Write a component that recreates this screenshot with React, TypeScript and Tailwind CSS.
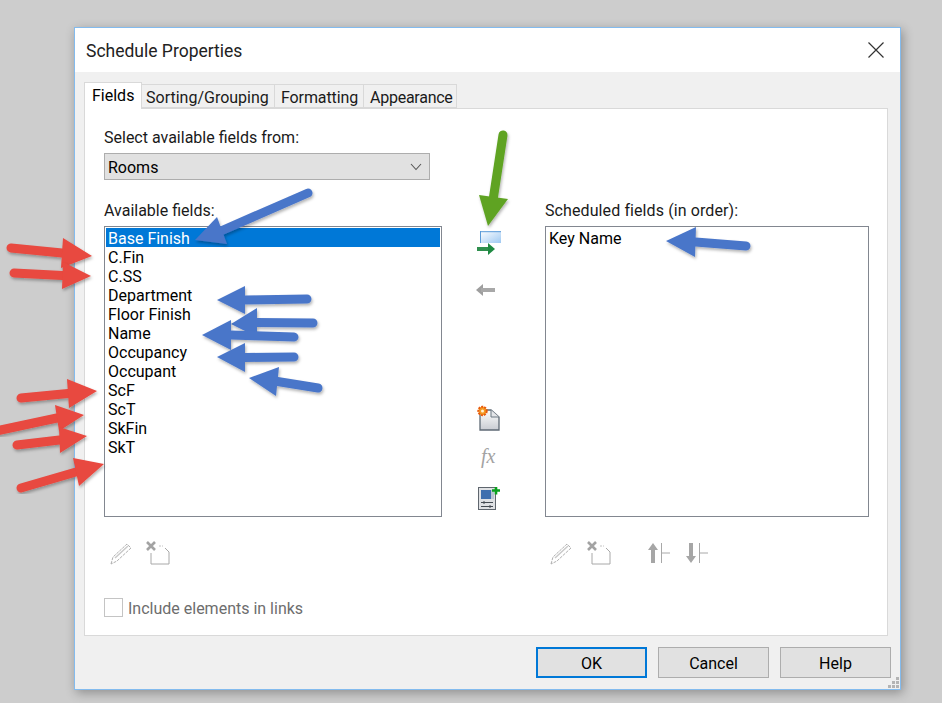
const AVAILABLE = ['Base Finish', 'C.Fin', 'C.SS', 'Department', 'Floor Finish', 'Name', 'Occupancy', 'Occupant', 'ScF', 'ScT', 'SkFin', 'SkT'];

type Pt = [number, number];
type ArrowDef = { tail: Pt; tip: Pt; a: Pt; b: Pt; color: string };

const BLUE = '#4a76c9';
const RED = '#e8483f';
const GREEN = '#5fa324';

const ARROWS: ArrowDef[] = [
  { tail: [308, 193], tip: [195, 240], a: [217, 217], b: [227, 244], color: BLUE },
  { tail: [307, 299], tip: [217, 300], a: [245, 286], b: [245, 314], color: BLUE },
  { tail: [313, 323], tip: [231, 324], a: [257, 308], b: [257, 337], color: BLUE },
  { tail: [294, 337], tip: [202, 335], a: [231, 320], b: [231, 350], color: BLUE },
  { tail: [294, 357], tip: [217, 357], a: [245, 343], b: [245, 372], color: BLUE },
  { tail: [318, 388], tip: [249, 378], a: [279, 367], b: [276, 396], color: BLUE },
  { tail: [746, 246], tip: [666, 241], a: [696, 227], b: [695, 257], color: BLUE },
  { tail: [503, 135], tip: [488, 226], a: [479, 195], b: [508, 199], color: GREEN },
  { tail: [11, 248], tip: [92, 256], a: [63, 238], b: [61, 268], color: RED },
  { tail: [14, 273], tip: [91, 276], a: [63, 262], b: [62, 289], color: RED },
  { tail: [21, 398], tip: [97, 391], a: [67, 379], b: [69, 408], color: RED },
  { tail: [-4, 431], tip: [84, 415], a: [55, 405], b: [59, 431], color: RED },
  { tail: [17, 445], tip: [87, 436], a: [59, 427], b: [60, 453], color: RED },
  { tail: [21, 488], tip: [104, 464], a: [73, 458], b: [79, 486], color: RED },
];

function Annotations() {
  return (
    <svg className="absolute left-0 top-0 pointer-events-none" width={942} height={703}>
      <defs>
        <filter id="arrow-shadow" x="-20%" y="-20%" width="140%" height="140%">
          <feDropShadow dx="1" dy="2" stdDeviation="1.5" floodColor="#000" floodOpacity="0.3" />
        </filter>
      </defs>
      {ARROWS.map((ar, i) => {
        const midX = (ar.a[0] + ar.b[0]) / 2;
        const midY = (ar.a[1] + ar.b[1]) / 2;
        return (
          <g key={i} filter="url(#arrow-shadow)">
            <line x1={ar.tail[0]} y1={ar.tail[1]} x2={midX} y2={midY} stroke={ar.color} strokeWidth={9} strokeLinecap="round" />
            <polygon points={`${ar.tip.join(',')} ${ar.a.join(',')} ${ar.b.join(',')}`} fill={ar.color} />
          </g>
        );
      })}
    </svg>
  );
}

function PencilIcon() {
  return (
    <svg width={24} height={24} viewBox="0 0 24 24" fill="none" className="block">
      <path d="M2 23 L4 16 L18 3 L22 7 L8 20 Z" stroke="#b0b0b0" strokeWidth={1} strokeDasharray="3 1" />
      <path d="M6 17 L19 5" stroke="#c9c9c9" strokeWidth={1.5} />
    </svg>
  );
}

function DeleteIcon() {
  return (
    <svg width={26} height={26} viewBox="0 0 26 26" fill="none" className="block">
      <path d="M2 2 L10 10 M10 2 L2 10" stroke="#a3a3a3" strokeWidth={2.6} />
      <path d="M6 13 V24 H24 V12 L20 8" stroke="#a8a8a8" strokeWidth={1} />
      <path d="M14 6 H18" stroke="#c4c4c4" strokeWidth={1} strokeDasharray="2 1" />
    </svg>
  );
}

function MoveIcon({ down }: { down?: boolean }) {
  return (
    <svg width={24} height={24} viewBox="0 0 24 24" fill="none" className="block">
      <path d={down ? 'M5 2 H9 V15 H12 L7 22 L2 15 H5 Z' : 'M7 2 L12 9 H9 V22 H5 V9 H2 Z'} fill="#a6a6a6" />
      <path d="M15.5 2 V22 M15.5 12 H24" stroke="#a8a8a8" strokeWidth={1} />
    </svg>
  );
}

function AddFieldIcon() {
  return (
    <svg width={26} height={24} viewBox="0 0 26 24" fill="none" className="block">
      <defs>
        <linearGradient id="add-field" x1="0" y1="0" x2="1" y2="1">
          <stop offset="0" stopColor="#ffffff" />
          <stop offset="1" stopColor="#9fc9f2" />
        </linearGradient>
      </defs>
      <rect x="4" y="0" width="21" height="12" fill="url(#add-field)" />
      <path d="M4 0.7 H25 M4.5 0 V12" stroke="#5b9bd8" />
      <path d="M1 18 H13" stroke="#2f8f4e" strokeWidth={4} />
      <path d="M12 12 L19 18 L12 24 Z" fill="#1f8a42" />
    </svg>
  );
}

function RemoveFieldIcon() {
  return (
    <svg width={20} height={14} viewBox="0 0 20 14" className="block">
      <path d="M7 1 L0 7 L7 13 Z" fill="#9e9e9e" />
      <rect x="5" y="5" width="14" height="4" fill="#a8a8a8" />
    </svg>
  );
}

function NewParamIcon() {
  return (
    <svg width={24} height={26} viewBox="0 0 24 26" fill="none" className="block">
      <defs>
        <linearGradient id="new-param" x1="0" y1="0" x2="0" y2="1">
          <stop offset="0" stopColor="#ffffff" />
          <stop offset="1" stopColor="#c8ccd2" />
        </linearGradient>
      </defs>
      <path d="M4 5 H15 L23 12 V25 H4 Z" fill="url(#new-param)" stroke="#5f6a75" strokeWidth={1.3} />
      <path d="M15 5 V12 H23" stroke="#6d7882" fill="#e4e6e9" />
      <circle cx="6.5" cy="6" r="4.2" fill="#f59a23" stroke="#e8590c" strokeWidth={2} strokeDasharray="2 1" />
      <circle cx="6.5" cy="6" r="1.5" fill="#fff3d6" />
    </svg>
  );
}

function AddCalcIcon() {
  return (
    <svg width={24} height={26} viewBox="0 0 24 26" fill="none" className="block">
      <rect x="2.5" y="3.5" width="17" height="22" fill="#dfe1e4" stroke="#5f666e" />
      <rect x="5" y="6" width="10" height="9" fill="#3f6fae" />
      <rect x="15" y="6" width="3" height="9" fill="#b8c4d2" />
      <path d="M5 18.5 H17 M5 22.5 H17" stroke="#444b52" strokeWidth={1} />
      <path d="M8 17 V20 M14 21 V24" stroke="#444b52" strokeWidth={1} />
      <path d="M20 3 V10.5 M16 6.5 H24" stroke="#0aa01e" strokeWidth={2.6} />
    </svg>
  );
}

function ListBox({ items, width, selected }: { items: string[]; width: string; selected?: number }) {
  return (
    <div className={`${width} h-[291px] mt-[6px] border border-[#828790] bg-white p-px`}>
      {items.map((name, i) => (
        <div
          key={name}
          className={`h-[19px] leading-[21px] pl-[2px] ${i === selected ? 'bg-[#0078d7] text-white' : 'text-black'}`}
        >
          {name}
        </div>
      ))}
    </div>
  );
}

function FooterButton({ label, primary }: { label: string; primary?: boolean }) {
  return (
    <div
      className={`w-[111px] h-[31px] flex items-center justify-center pt-[2px] bg-[#e1e1e1] text-black ${
        primary ? 'border-2 border-[#0078d7]' : 'border border-[#adadad]'
      }`}
    >
      {label}
    </div>
  );
}

export default function App() {
  return (
    <div className="relative w-[942px] h-[703px] overflow-hidden bg-[#cdcdcd] pt-[27px] pl-[74px] text-[16px] text-[#1a1a1a] font-['Roboto',sans-serif]">
      <div className="relative w-[827px] h-[663px] border border-[#83bbee] bg-[#f0f0f0] shadow-[2px_3px_10px_rgba(0,0,0,0.3)] flex flex-col">
        {/* Title bar */}
        <div className="h-[44px] shrink-0 bg-white flex items-center justify-between pl-[11px] pr-[15px]">
          <span className="text-[17.5px] pt-[2px] text-[#222]">Schedule Properties</span>
          <svg width={18} height={18} viewBox="0 0 18 18" fill="none">
            <path d="M1.5 1.5 L16.5 16.5 M16.5 1.5 L1.5 16.5" stroke="#333" strokeWidth={1.2} />
          </svg>
        </div>

        {/* Tabs */}
        <div className="h-[36px] shrink-0 flex items-end pl-[9px] relative z-10">
          <div className="w-[58px] h-[27px] -mb-px bg-white border border-b-0 border-[#d9d9d9] pl-[7px] leading-[25px] text-black">Fields</div>
          <div className="w-[133px] h-[24px] bg-[#f0f0f0] border border-l-0 border-[#d9d9d9] pl-[4px] leading-[25px]">Sorting/Grouping</div>
          <div className="w-[89px] h-[24px] bg-[#f0f0f0] border border-l-0 border-[#d9d9d9] pl-[6px] leading-[25px] tracking-[-0.1px]">Formatting</div>
          <div className="w-[93px] h-[24px] bg-[#f0f0f0] border border-l-0 border-[#d9d9d9] pl-[6px] leading-[25px] tracking-[-0.25px]">Appearance</div>
        </div>

        {/* Panel */}
        <div className="ml-[9px] w-[804px] h-[528px] shrink-0 border border-[#d9d9d9] bg-white pl-[19px] pt-[18px]">
          <div className="h-[20px] leading-[22px]">Select available fields from:</div>
          <div className="w-[326px] h-[27px] mt-[6px] bg-[#e1e1e1] border border-[#adadad] flex items-center justify-between pl-[3px] pr-[7px]">
            <span className="text-black pt-[2px]">Rooms</span>
            <svg width={12} height={8} viewBox="0 0 12 8" fill="none">
              <path d="M1 1 L6 6.5 L11 1" stroke="#555" strokeWidth={1.1} />
            </svg>
          </div>

          <div className="flex mt-[20px]">
            <div className="w-[338px]">
              <div className="h-[20px] leading-[22px]">Available fields:</div>
              <ListBox items={AVAILABLE} width="w-[338px]" selected={0} />
              <div className="flex items-center mt-[23px] pl-[5px] gap-[12px]">
                <PencilIcon />
                <DeleteIcon />
              </div>
            </div>

            <div className="w-[103px] pl-[34px] pt-[31px]">
              <AddFieldIcon />
              <div className="mt-[28px]"><RemoveFieldIcon /></div>
              <div className="mt-[108px]"><NewParamIcon /></div>
              <div className="mt-[15px] h-[20px] leading-[20px] pl-[5px] text-[20px] italic text-[#a3a3a3] font-['Liberation_Serif',serif]">fx</div>
              <div className="mt-[18px]"><AddCalcIcon /></div>
            </div>

            <div className="w-[324px]">
              <div className="h-[20px] leading-[22px] tracking-[0.1px]">Scheduled fields (in order):</div>
              <ListBox items={['Key Name']} width="w-[324px]" />
              <div className="flex items-center mt-[23px] pl-[4px]">
                <PencilIcon />
                <div className="ml-[13px]"><DeleteIcon /></div>
                <div className="ml-[34px]"><MoveIcon /></div>
                <div className="ml-[14px]"><MoveIcon down /></div>
              </div>
            </div>
          </div>

          <div className="flex items-start h-[19px] mt-[32px] text-[#6d6d6d]">
            <div className="w-[19px] h-[19px] border border-[#c4c4c4] bg-white" />
            <span className="ml-[5px] leading-[22px]">Include elements in links</span>
          </div>
        </div>

        {/* Footer buttons */}
        <div className="flex justify-end gap-[11px] pt-[11px] pr-[9px]">
          <FooterButton label="OK" primary />
          <FooterButton label="Cancel" />
          <FooterButton label="Help" />
        </div>

        {/* Resize grip */}
        <svg className="absolute right-0 bottom-0" width={12} height={12} viewBox="0 0 12 12">
          <path d="M8 0h3v3H8zM4 4h3v3H4zM8 4h3v3H8zM0 8h3v3H0zM4 8h3v3H4zM8 8h3v3H8z" fill="#b4b4b4" />
        </svg>
      </div>
      <Annotations />
    </div>
  );
}
